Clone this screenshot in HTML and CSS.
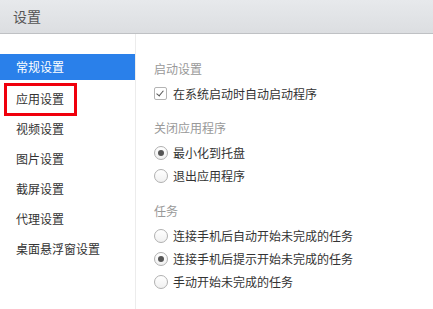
FILE: index.html
```html
<!DOCTYPE html>
<html lang="zh-CN">
<head>
    <meta charset="UTF-8">
    <title>设置</title>
    <link rel="stylesheet" href="styles.css">
</head>
<body>
    <div class="header">设置</div>
    <div class="main">
        <div class="sidebar">
            <div class="nav-item active">常规设置</div>
            <div class="nav-item">应用设置</div>
            <div class="nav-item">视频设置</div>
            <div class="nav-item">图片设置</div>
            <div class="nav-item">截屏设置</div>
            <div class="nav-item">代理设置</div>
            <div class="nav-item">桌面悬浮窗设置</div>
            <div class="highlight"></div>
        </div>
        <div class="content">
            <div class="section">
                <div class="section-title">启动设置</div>
                <label class="option">
                    <span class="checkbox checked"></span>在系统启动时自动启动程序
                </label>
            </div>
            <div class="section">
                <div class="section-title">关闭应用程序</div>
                <label class="option"><span class="radio checked"></span>最小化到托盘</label>
                <label class="option"><span class="radio"></span>退出应用程序</label>
            </div>
            <div class="section">
                <div class="section-title">任务</div>
                <label class="option"><span class="radio"></span>连接手机后自动开始未完成的任务</label>
                <label class="option"><span class="radio checked"></span>连接手机后提示开始未完成的任务</label>
                <label class="option"><span class="radio"></span>手动开始未完成的任务</label>
            </div>
        </div>
    </div>
</body>
</html>
```

FILE: styles.css
```css
body {
    margin: 0;
    height: 100vh;
    display: flex;
    flex-direction: column;
    font-family: "Noto Sans CJK SC", "Noto Sans", sans-serif;
    font-size: 12px;
    color: #333;
    background: #fff;
    overflow: hidden;
}
.header {
    height: 33px;
    line-height: 33px;
    padding-left: 13px;
    font-size: 14px;
    color: #555;
    background: linear-gradient(#e7e9ec, #dcdee1);
    border-bottom: 1px solid #bfc1c4;
    flex-shrink: 0;
}
.main {
    flex: 1;
    display: flex;
}
.sidebar {
    position: relative;
    width: 135px;
    padding-top: 20px;
    border-right: 1px solid #ececec;
    box-sizing: content-box;
}
.nav-item {
    height: 30px;
    line-height: 30px;
    padding-left: 16px;
    color: #333;
}
.nav-item.active {
    height: 26px;
    line-height: 26px;
    margin-bottom: 4px;
    background: #2a80ea;
    color: #fff;
}
.highlight {
    position: absolute;
    left: 4px;
    top: 49px;
    width: 73px;
    height: 33px;
    border: 3px solid #f0000c;
    box-sizing: border-box;
}
.content {
    flex: 1;
    padding: 25px 0 0 18px;
}
.section {
    margin-bottom: 13px;
}
.section + .section {
    margin-bottom: 14px;
}
.section-title {
    height: 20px;
    line-height: 20px;
    margin-bottom: 3px;
    color: #999;
}
.option {
    display: flex;
    align-items: center;
    height: 23px;
    color: #333;
}
.checkbox {
    width: 13px;
    height: 13px;
    margin-right: 6px;
    border: 1px solid #b4b4b4;
    border-radius: 2px;
    box-sizing: border-box;
    background: #fff;
    position: relative;
}
.checkbox.checked::after {
    content: "";
    position: absolute;
    left: 3px;
    top: 1px;
    width: 3px;
    height: 6px;
    border-right: 1.5px solid #555;
    border-bottom: 1.5px solid #555;
    transform: rotate(40deg);
}
.radio {
    width: 14px;
    height: 14px;
    margin-right: 5px;
    border: 1px solid #b0b0b0;
    border-radius: 50%;
    box-sizing: border-box;
    background: linear-gradient(#fff, #f0f0f0);
    display: flex;
    align-items: center;
    justify-content: center;
}
.radio.checked::after {
    content: "";
    width: 6px;
    height: 6px;
    border-radius: 50%;
    background: #555;
}
```
